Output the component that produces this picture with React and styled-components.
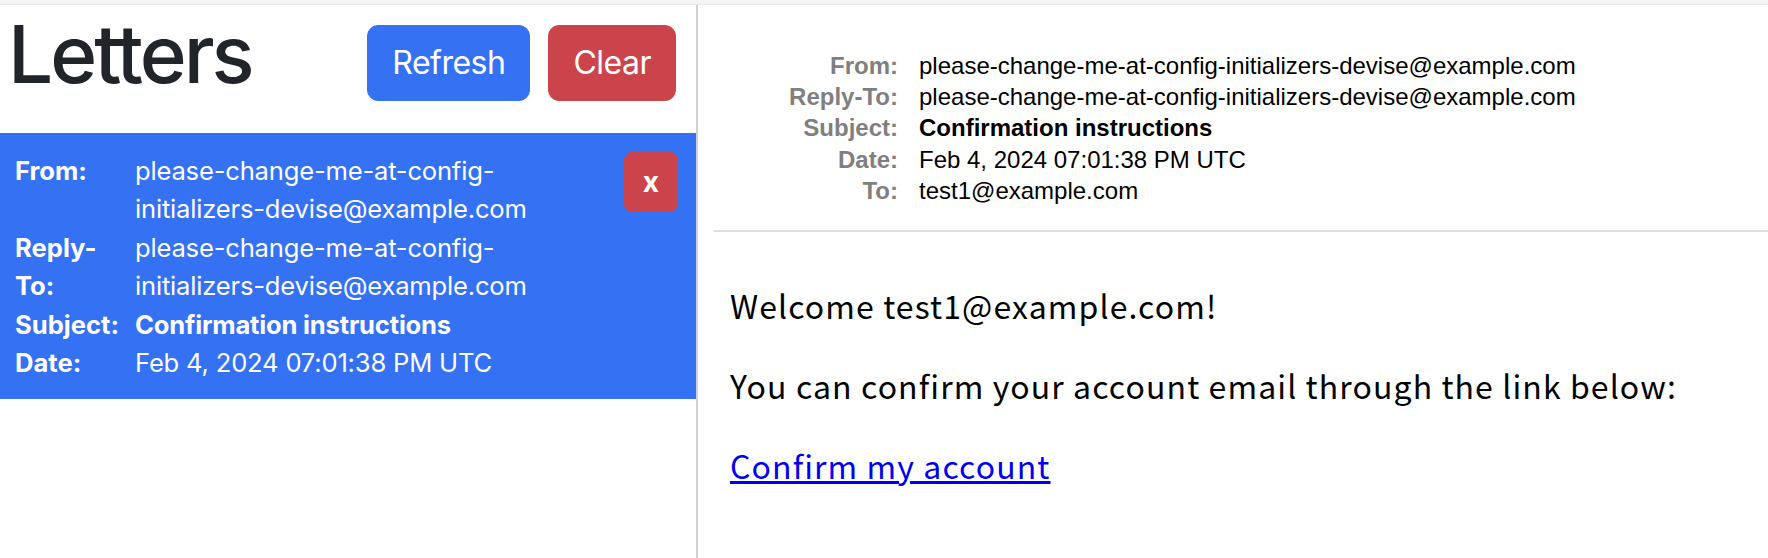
import React from "react";
import styled, { createGlobalStyle } from "styled-components";

const Global = createGlobalStyle`
  html, body { margin: 0; padding: 0; background: #fff; }
  body { font-family: Inter, "Noto Sans", sans-serif; }
  * { box-sizing: border-box; }
`;

const Page = styled.div`
  display: flex;
  flex-direction: column;
  min-height: 100vh;
`;

const TopStrip = styled.div`
  height: 5px;
  background: #f3f4f6;
  border-bottom: 1px solid #e8e9eb;
`;

const Main = styled.div`
  display: flex;
  flex: 1;
`;

const Sidebar = styled.aside`
  width: 696px;
  flex-shrink: 0;
`;

const SidebarHeader = styled.header`
  display: flex;
  justify-content: space-between;
  align-items: flex-start;
  padding: 1px 20px 31px 8px;
`;

const Title = styled.h1`
  margin: 0;
  font-family: Inter, sans-serif;
  font-size: 80px;
  font-weight: 500;
  line-height: 96px;
  color: #212529;
  letter-spacing: -3px;
`;

const Actions = styled.div`
  display: flex;
  gap: 18px;
  margin-top: 19px;
`;

const colors = { primary: "#3471f3", danger: "#cc444b" };

const Button = styled.button`
  font-family: Inter, sans-serif;
  font-size: 32px;
  line-height: 48px;
  font-weight: 400;
  letter-spacing: -0.5px;
  color: #fff;
  background: ${(p) => colors[p.$variant]};
  border: 1px solid ${(p) => colors[p.$variant]};
  border-radius: 11px;
  padding: 13px 24px;
  cursor: pointer;
`;

const MessageItem = styled.div`
  display: flex;
  align-items: flex-start;
  background: ${colors.primary};
  color: #fff;
  padding: 19px 18px 17px 15px;
`;

const Fields = styled.div`
  flex: 1;
  display: grid;
  grid-template-columns: 120px 1fr;
  font-size: 25.6px;
  line-height: 38.4px;
  padding-right: 20px;
`;

const FieldLabel = styled.div`
  font-weight: 700;
  padding-right: 13px;
`;

const FieldValue = styled.div`
  font-weight: ${(p) => (p.$bold ? 700 : 400)};
  letter-spacing: -0.2px;
`;

const DeleteButton = styled.button`
  font-family: Inter, sans-serif;
  font-size: 28px;
  line-height: 42px;
  font-weight: 700;
  color: #fff;
  background: ${colors.danger};
  border: 1px solid ${colors.danger};
  border-radius: 8px;
  padding: 8px 18px;
  cursor: pointer;
`;

const Viewer = styled.section`
  flex: 1;
  border-left: 2px solid #d2d2d2;
`;

const MessageHeaders = styled.div`
  margin-left: 16px;
  padding: 45px 0 24px 0;
  border-bottom: 2px solid #dedede;
  font-family: "Liberation Sans", Helvetica, Arial, sans-serif;
  font-size: 24px;
  line-height: 31.2px;
`;

const HeaderList = styled.dl`
  margin: 0;
  display: grid;
  grid-template-columns: 184px 1fr;
  column-gap: 21px;
`;

const HeaderName = styled.dt`
  text-align: right;
  font-weight: 700;
  color: #7f7f7f;
`;

const HeaderValue = styled.dd`
  margin: 0;
  color: #000;
  font-weight: ${(p) => (p.$bold ? 700 : 400)};
`;

const MessageBody = styled.div`
  padding: 17px 16px 0 32px;
  font-family: "Noto Sans CJK JP", sans-serif;
  font-size: 32px;
  line-height: 48px;
  letter-spacing: 1.1px;
  color: #000;
`;

const Paragraph = styled.p`
  margin: 32px 0;
`;

const Link = styled.a`
  color: #0000ee;
  text-decoration: underline;
`;

const sender = "please-change-me-at-config-initializers-devise@example.com";

const listFields = [
  { label: "From:", value: sender },
  { label: "Reply-To:", value: sender },
  { label: "Subject:", value: "Confirmation instructions", bold: true },
  { label: "Date:", value: "Feb 4, 2024 07:01:38 PM UTC" },
];

const headerFields = [
  { label: "From:", value: sender },
  { label: "Reply-To:", value: sender },
  { label: "Subject:", value: "Confirmation instructions", bold: true },
  { label: "Date:", value: "Feb 4, 2024 07:01:38 PM UTC" },
  { label: "To:", value: "test1@example.com" },
];

export default function App() {
  return (
    <>
      <Global />
      <Page>
        <TopStrip />
        <Main>
          <Sidebar>
            <SidebarHeader>
              <Title>Letters</Title>
              <Actions>
                <Button $variant="primary">Refresh</Button>
                <Button $variant="danger">Clear</Button>
              </Actions>
            </SidebarHeader>
            <MessageItem>
              <Fields>
                {listFields.map((f) => (
                  <React.Fragment key={f.label}>
                    <FieldLabel>{f.label}</FieldLabel>
                    <FieldValue $bold={f.bold}>{f.value}</FieldValue>
                  </React.Fragment>
                ))}
              </Fields>
              <DeleteButton>x</DeleteButton>
            </MessageItem>
          </Sidebar>
          <Viewer>
            <MessageHeaders>
              <HeaderList>
                {headerFields.map((f) => (
                  <React.Fragment key={f.label}>
                    <HeaderName>{f.label}</HeaderName>
                    <HeaderValue $bold={f.bold}>{f.value}</HeaderValue>
                  </React.Fragment>
                ))}
              </HeaderList>
            </MessageHeaders>
            <MessageBody>
              <Paragraph>Welcome test1@example.com!</Paragraph>
              <Paragraph>You can confirm your account email through the link below:</Paragraph>
              <Paragraph>
                <Link href="#">Confirm my account</Link>
              </Paragraph>
            </MessageBody>
          </Viewer>
        </Main>
      </Page>
    </>
  );
}
